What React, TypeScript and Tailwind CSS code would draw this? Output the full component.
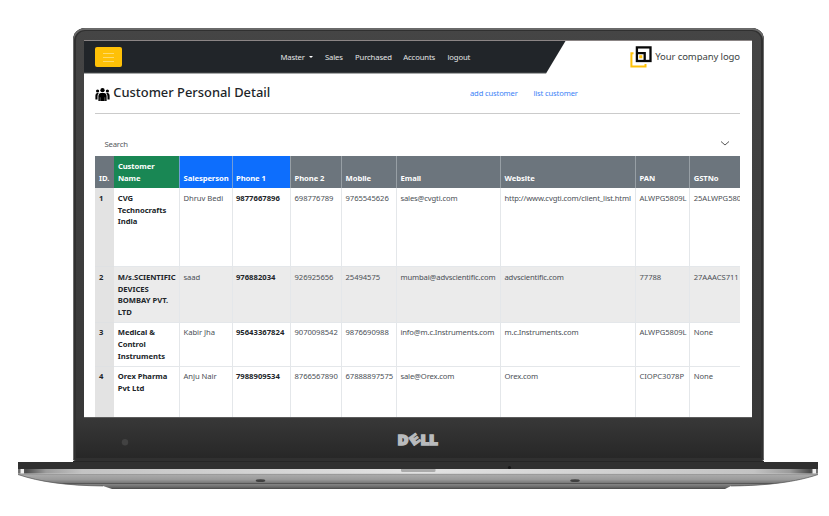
import React from "react";

type Row = { id: string; name: string; cells: string[]; height: string; shade: string };

const columns = "grid grid-cols-[18.5px_65.7px_52.4px_58.6px_51px_55px_104px_135px_54.2px_50.6px]";

const headers = [
  { label: "ID.", color: "bg-[#6c757d]" },
  { label: "Customer Name", color: "bg-[#198754]" },
  { label: "Salesperson", color: "bg-[#0d6efd]" },
  { label: "Phone 1", color: "bg-[#0d6efd]" },
  { label: "Phone 2", color: "bg-[#6c757d]" },
  { label: "Mobile", color: "bg-[#6c757d]" },
  { label: "Email", color: "bg-[#6c757d]" },
  { label: "Website", color: "bg-[#6c757d]" },
  { label: "PAN", color: "bg-[#6c757d]" },
  { label: "GSTNo", color: "bg-[#6c757d]" },
];

const cellStyles = [
  "",
  "font-bold text-[#212529] tracking-[0.03px]",
  "",
  "",
  "tracking-[-0.15px]",
  "tracking-[-0.14px]",
  "",
  "",
];

const rows: Row[] = [
  {
    id: "1",
    name: "CVG Technocrafts India",
    cells: ["Dhruv Bedi", "9877667896", "698776789", "9765545626", "sales@cvgti.com", "http://www.cvgti.com/client_list.html", "ALWPG5809L", "25ALWPG580"],
    height: "h-[79px]",
    shade: "bg-white",
  },
  {
    id: "2",
    name: "M/s.SCIENTIFIC DEVICES BOMBAY PVT. LTD",
    cells: ["saad", "976882034", "926925656", "25494575", "mumbai@advscientific.com", "advscientific.com", "77788", "27AAACS711"],
    height: "h-[55.5px]",
    shade: "bg-[#ebebeb]",
  },
  {
    id: "3",
    name: "Medical & Control Instruments",
    cells: ["Kabir Jha", "95643367824", "9070098542", "9876690988", "info@m.c.Instruments.com", "m.c.Instruments.com", "ALWPG5809L", "None"],
    height: "h-[44px]",
    shade: "bg-white",
  },
  {
    id: "4",
    name: "Orex Pharma Pvt Ltd",
    cells: ["Anju Nair", "7988909534", "8766567890", "67888897575", "sale@Orex.com", "Orex.com", "CIOPC3078P", "None"],
    height: "h-[60px]",
    shade: "bg-white",
  },
];

function Navbar() {
  return (
    <nav className="relative flex h-8 shrink-0 items-center">
      <svg className="absolute inset-0" width="668" height="33" viewBox="0 0 668 33">
        <path d="M0 0H481.5L462 32.5H0Z" fill="#212529" />
        <path d="M0 32.3H462" stroke="#b5b6b7" strokeWidth="0.8" />
      </svg>
      <button className="relative ml-[11px] flex h-[20px] w-[27px] flex-col items-center justify-center gap-[3px] rounded-[2px] bg-[#ffc107]">
        <span className="h-px w-[11px] bg-[#ffda68]" />
        <span className="h-px w-[11px] bg-[#ffda68]" />
        <span className="h-px w-[11px] bg-[#ffda68]" />
      </button>
      <div className="relative ml-[158.4px] flex items-center whitespace-nowrap pt-[1.6px] text-[7.7px] tracking-[-0.13px] text-[#e4e5e6]">
        <span className="w-[28.6px]">Master</span>
        <span className="mb-px h-0 w-0 border-x-[2.5px] border-t-[2.5px] border-x-transparent border-t-white" />
        <span className="ml-[12px] w-[30px]">Sales</span>
        <span className="w-[48.3px]">Purchased</span>
        <span className="w-[44.2px]">Accounts</span>
        <span>logout</span>
      </div>
      <div className="relative ml-auto mr-[12px] flex items-center gap-[3px] text-[9.5px] tracking-[-0.09px] text-[#3c3f42]">
        <svg width="22" height="23" viewBox="0 0 22 23">
          <path d="M3.5 7.2H1.4V20.6H15.5V18" fill="none" stroke="#ffc107" strokeWidth="2" />
          <rect x="6.9" y="1.4" width="13.6" height="13.6" fill="white" stroke="#080808" strokeWidth="2.3" />
          <path d="M7 7.1H14.7V15" fill="none" stroke="#080808" strokeWidth="2.3" />
          <rect x="9.2" y="9.2" width="3.1" height="3.1" fill="#ffc107" />
        </svg>
        <span className="whitespace-nowrap">Your company logo</span>
      </div>
    </nav>
  );
}

function PeopleIcon() {
  return (
    <svg className="mt-0.5 shrink-0" width="15" height="13" viewBox="0 0 15 13" fill="black">
      <circle cx="7.5" cy="2.2" r="2.15" />
      <circle cx="2.6" cy="3" r="1.6" />
      <circle cx="12.4" cy="3" r="1.6" />
      <path d="M3.4 12.9V8.5Q3.4 5.2 6 5H9Q11.6 5.2 11.6 8.5V12.9Z" />
      <path d="M2.5 11.4H.4V7.5Q.4 5.2 2.3 5.1H3.8Q2.5 6.3 2.5 8.5Z M12.5 11.4H14.6V7.5Q14.6 5.2 12.7 5.1H11.2Q12.5 6.3 12.5 8.5Z" />
      <path d="M5.2 9.3V13M9.8 9.3V13" stroke="white" strokeWidth=".35" />
    </svg>
  );
}

function CustomerTable() {
  return (
    <div className="ml-[11px] w-[645px] overflow-hidden text-[7.65px] leading-[11.8px] tracking-[-0.04px] text-[#4b5056]">
      <div className={`${columns} h-8 font-bold text-white`}>
        {headers.map((h, i) => (
          <div
            key={h.label}
            className={`flex items-end pb-[3.2px] ${i ? "border-l pl-[3.4px] tracking-[-0.08px]" : "pl-[4px]"} ${i === 1 ? "pr-4" : ""} ${i > 1 ? "border-l-[#b4bac0]/60" : "border-l-[#198754]"} ${h.color}`}
          >
            {h.label}
          </div>
        ))}
      </div>
      {rows.map((r) => (
        <div key={r.id} className={`${columns} ${r.height} ${r.shade}`}>
          <div className="border-b border-[#dfe1e3] bg-[#e3e3e3] pl-[4px] pt-[4.9px] font-bold text-[#212529]">{r.id}</div>
          <div className="border-b border-[#e4e7ea] pl-[4.3px] pt-[4.9px] font-bold text-[#212529]">{r.name}</div>
          {r.cells.map((c, i) => (
            <div
              key={i}
              className={`whitespace-nowrap border-b border-l border-[#e4e7ea] pl-[3.3px] pt-[4.9px] ${cellStyles[i]}`}
            >
              {c}
            </div>
          ))}
        </div>
      ))}
    </div>
  );
}

function Screen() {
  return (
    <main className="flex h-[376px] w-[668px] flex-col overflow-hidden bg-white">
      <Navbar />
      <header className="flex h-10 shrink-0 items-center pl-[11px]">
        <PeopleIcon />
        <h1 className="ml-[3.3px] w-[356.7px] whitespace-nowrap text-[12.9px] font-medium text-[#212529]">Customer Personal Detail</h1>
        <a className="w-[63.5px] whitespace-nowrap pt-0.5 text-[7.6px] tracking-[-0.14px] text-[#3b82f6]">add customer</a>
        <a className="whitespace-nowrap pt-0.5 text-[7.6px] tracking-[-0.14px] text-[#3b82f6]">list customer</a>
      </header>
      <div className="mx-[11px] mr-3 h-px shrink-0 bg-[#cbcbcb]" />
      <div className="flex h-[42px] shrink-0 items-end justify-between pb-[6px] pl-[20.5px] pr-[22px]">
        <span className="text-[7.7px] leading-[12px] tracking-[-0.18px] text-[#54585d]">Search</span>
        <svg className="mb-[3px]" width="10" height="7" viewBox="0 0 10 7">
          <path d="M1 1.5L5 5L9 1.5" fill="none" stroke="#444" strokeWidth=".9" />
        </svg>
      </div>
      <CustomerTable />
    </main>
  );
}

function Chin() {
  return (
    <svg width="691" height="45" viewBox="73 417 691 45" className="block">
      <path d="M84 417.3H752" stroke="#858585" strokeWidth=".6" />
      <circle cx="125" cy="442.3" r="3.2" fill="#424242" />
      <g fill="#b9bbbd" stroke="#b9bbbd" strokeWidth="1.5" fontFamily="Open Sans, Noto Sans, sans-serif" fontWeight="800" fontSize="14.6">
        <text x="397.4" y="445" textLength="11" lengthAdjust="spacingAndGlyphs">D</text>
        <text x="-5" y="5" textLength="10.5" lengthAdjust="spacingAndGlyphs" fontSize="13.5" strokeWidth=".7" transform="translate(414.3 439.6) rotate(-35)">E</text>
        <text x="420.6" y="445" textLength="8.9" lengthAdjust="spacingAndGlyphs">L</text>
        <text x="429" y="445" textLength="8.9" lengthAdjust="spacingAndGlyphs">L</text>
      </g>
    </svg>
  );
}

function Base() {
  return (
    <svg width="829" height="28" viewBox="0 461 829 28" className="block">
      <defs>
        <linearGradient id="metal" x1="0" y1="473" x2="0" y2="489" gradientUnits="userSpaceOnUse">
          <stop offset="0" stopColor="#858585" />
          <stop offset=".15" stopColor="#a8a8a8" />
          <stop offset=".4" stopColor="#9b9b9b" />
          <stop offset=".63" stopColor="#767676" />
          <stop offset=".66" stopColor="#525252" />
          <stop offset=".72" stopColor="#828282" />
          <stop offset=".88" stopColor="#696969" />
          <stop offset="1" stopColor="#484848" />
        </linearGradient>
        <linearGradient id="edge" x1="18" y1="0" x2="818" y2="0" gradientUnits="userSpaceOnUse">
          <stop offset="0" stopColor="#777" />
          <stop offset=".01" stopColor="#4b4b4b" />
          <stop offset=".035" stopColor="#9b9b9b" />
          <stop offset=".08" stopColor="#c3c3c3" />
          <stop offset=".5" stopColor="#e2e2e2" />
          <stop offset=".92" stopColor="#c3c3c3" />
          <stop offset=".965" stopColor="#9b9b9b" />
          <stop offset=".99" stopColor="#4b4b4b" />
          <stop offset="1" stopColor="#777" />
        </linearGradient>
      </defs>
      <path d="M73 461H764V462H73Z" fill="#262626" />
      <path d="M18 473.5H818V474.5C796 482 768 486 731 486L725 489H112L103 486C67 486 40 482 18 474.5Z" fill="url(#metal)" />
      <path d="M18 474.5C40 482 67 485.5 103 486M818 474.5C796 482 768 485.5 731 486" fill="none" stroke="#555" strokeWidth=".7" />
      <path d="M18 462H818V470H18Z" fill="#303030" />
      <path d="M18 469H818V473.5H18Z" fill="url(#edge)" />
      <path d="M20.5 469H24V473.5H20.5ZM812.5 469H816V473.5H812.5Z" fill="#eee" />
      <path d="M401 469H435.5V470.5Q435.5 472 434 472H402.5Q401 472 401 470.5Z" fill="#aaa" />
      <ellipse cx="260.5" cy="480.7" rx="4.8" ry="1.4" fill="#414141" />
      <ellipse cx="575" cy="480.7" rx="4.8" ry="1.4" fill="#414141" />
      <circle cx="509.5" cy="467.5" r="1.6" fill="#181818" />
    </svg>
  );
}

export default function App() {
  return (
    <div className="h-[516px] w-[829px] overflow-hidden bg-white pt-7 font-['Noto_Sans','Open_Sans',sans-serif]">
      <div className="ml-[73px] h-[433px] w-[691px] rounded-b-[3px] rounded-t-[12px] bg-linear-to-b from-[#454545] via-[#383838] via-90% to-[#262626] shadow-[inset_0_1px_0_1px_#6a6a6a,inset_0_0_0_3px_#303030]">
        <div className="pl-[11px] pt-3">
          <div className="w-[668px] border-t border-[#8b8585]">
            <Screen />
          </div>
        </div>
        <Chin />
      </div>
      <Base />
    </div>
  );
}
